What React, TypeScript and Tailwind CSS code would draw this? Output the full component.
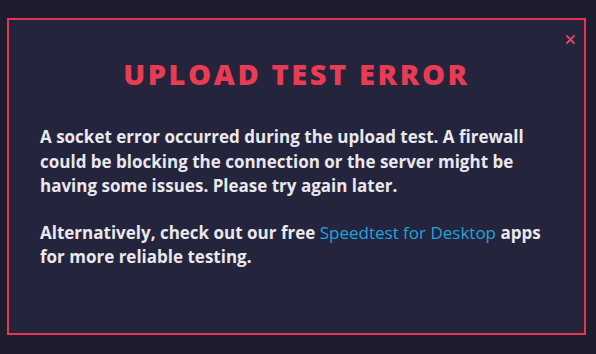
export default function App() {
  return (
    <div className="w-[596px] h-[354px] bg-[#1d1d2e] pt-[18px] pl-[7px] overflow-hidden" style={{ fontFamily: '"Open Sans", "Lato", sans-serif' }}>
      <div className="relative w-[579px] h-[317px] border-2 border-[#e8344f] bg-[#24243c] pl-[31px]">
        <svg className="absolute right-[9px] top-[15px]" width="9" height="9" viewBox="0 0 9 9">
          <path d="M1 1 L8 8 M8 1 L1 8" stroke="#dc4670" strokeWidth="1.8" strokeLinecap="round" />
        </svg>
        <h1 className="text-center text-[#ea3b54] text-[29px] font-extrabold tracking-[2.6px] leading-[34px] mt-[37px] pr-[31px]">UPLOAD TEST ERROR</h1>
        <p className="mt-[34px] w-[500px] text-[#e8e8ee] text-[17px] font-bold leading-[24.5px]">
          A socket error occurred during the upload test. A firewall could be blocking the connection or the server might be having some issues. Please try again later.
        </p>
        <p className="mt-[22px] w-[520px] text-[#e8e8ee] text-[17px] font-bold leading-[24px]">
          Alternatively, check out our free <span className="text-[#1fa5de] font-normal">Speedtest for Desktop</span> apps for more reliable testing.
        </p>
      </div>
    </div>
  );
}
